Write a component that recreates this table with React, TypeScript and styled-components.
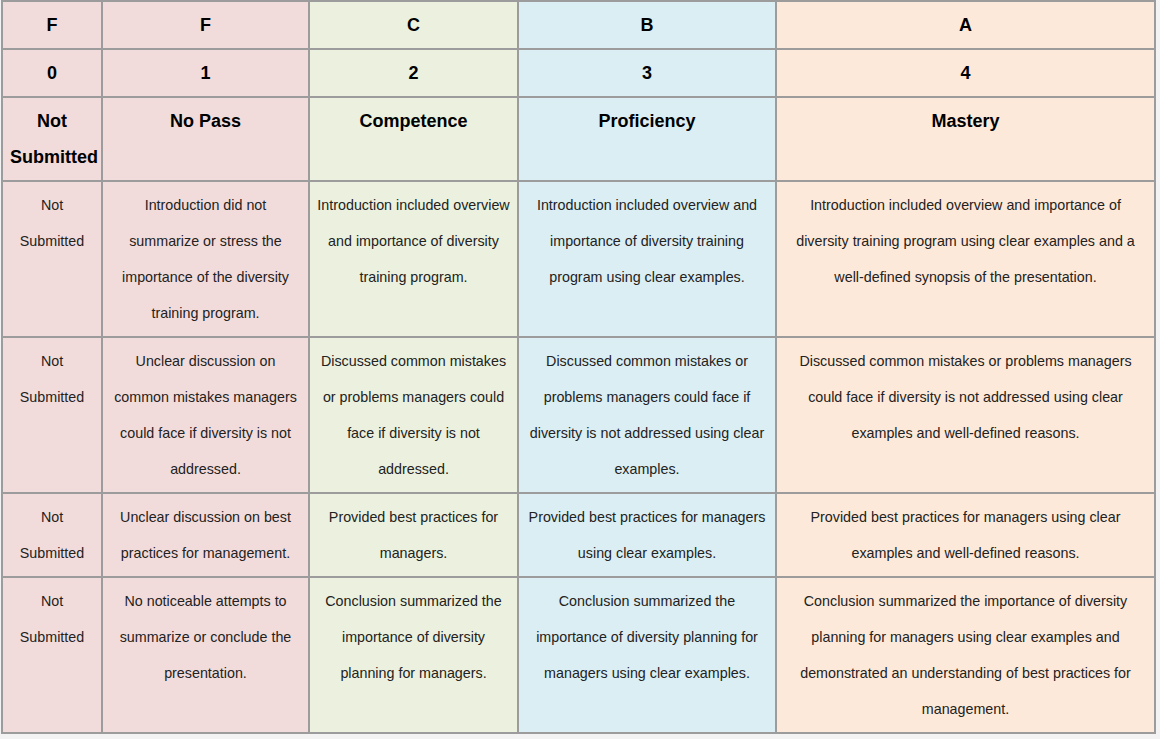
import React from 'react'
import styled, { createGlobalStyle } from 'styled-components'

const GlobalStyle = createGlobalStyle`
  html, body {
    margin: 0;
    padding: 0;
    background: #f3f3f3;
  }
`

const Wrapper = styled.div`
  padding: 0 0 0 1px;
`

const Table = styled.table`
  border-collapse: collapse;
  table-layout: fixed;
  width: 1153px;
  font-family: 'Liberation Sans', Arial, sans-serif;
`

type Tone = 'f' | 'c' | 'b' | 'a'

const tones: Record<Tone, string> = {
  f: '#f2dcdb',
  c: '#ebf1de',
  b: '#dbeef3',
  a: '#fde9d9',
}

const Cell = styled.td<{ $tone: Tone }>`
  border: 2px solid #9c9c9c;
  background: ${(p) => tones[p.$tone]};
  padding: 5px 7px;
  text-align: center;
  vertical-align: top;
  font-size: 14.3px;
  line-height: 36px;
  color: #222;
`

const HeadCell = styled(Cell).attrs({ as: 'th' })`
  font-size: 18px;
  font-weight: bold;
  color: #000;
`

const columns: { tone: Tone; width: number; letter: string; score: string; title: string }[] = [
  { tone: 'f', width: 100, letter: 'F', score: '0', title: 'Not Submitted' },
  { tone: 'f', width: 207, letter: 'F', score: '1', title: 'No Pass' },
  { tone: 'c', width: 209, letter: 'C', score: '2', title: 'Competence' },
  { tone: 'b', width: 258, letter: 'B', score: '3', title: 'Proficiency' },
  { tone: 'a', width: 379, letter: 'A', score: '4', title: 'Mastery' },
]

const rows: string[][] = [
  [
    'Not Submitted',
    'Introduction did not summarize or stress the importance of the diversity training program.',
    'Introduction included overview and importance of diversity training program.',
    'Introduction included overview and importance of diversity training program using clear examples.',
    'Introduction included overview and importance of diversity training program using clear examples and a well-defined synopsis of the presentation.',
  ],
  [
    'Not Submitted',
    'Unclear discussion on common mistakes managers could face if diversity is not addressed.',
    'Discussed common mistakes or problems managers could face if diversity is not addressed.',
    'Discussed common mistakes or problems managers could face if diversity is not addressed using clear examples.',
    'Discussed common mistakes or problems managers could face if diversity is not addressed using clear examples and well-defined reasons.',
  ],
  [
    'Not Submitted',
    'Unclear discussion on best practices for management.',
    'Provided best practices for managers.',
    'Provided best practices for managers using clear examples.',
    'Provided best practices for managers using clear examples and well-defined reasons.',
  ],
  [
    'Not Submitted',
    'No noticeable attempts to summarize or conclude the presentation.',
    'Conclusion summarized the importance of diversity planning for managers.',
    'Conclusion summarized the importance of diversity planning for managers using clear examples.',
    'Conclusion summarized the importance of diversity planning for managers using clear examples and demonstrated an understanding of best practices for management.',
  ],
]

const App = () => {
  return (
    <Wrapper>
      <GlobalStyle />
      <Table>
        <colgroup>
          {columns.map((c, i) => (
            <col key={i} style={{ width: c.width }} />
          ))}
        </colgroup>
        <thead>
          <tr>
            {columns.map((c, i) => (
              <HeadCell key={i} $tone={c.tone}>
                {c.letter}
              </HeadCell>
            ))}
          </tr>
          <tr>
            {columns.map((c, i) => (
              <HeadCell key={i} $tone={c.tone}>
                {c.score}
              </HeadCell>
            ))}
          </tr>
          <tr>
            {columns.map((c, i) => (
              <HeadCell key={i} $tone={c.tone}>
                {c.title}
              </HeadCell>
            ))}
          </tr>
        </thead>
        <tbody>
          {rows.map((row, r) => (
            <tr key={r}>
              {row.map((text, i) => (
                <Cell key={i} $tone={columns[i].tone}>
                  {text}
                </Cell>
              ))}
            </tr>
          ))}
        </tbody>
      </Table>
    </Wrapper>
  )
}

export default App
